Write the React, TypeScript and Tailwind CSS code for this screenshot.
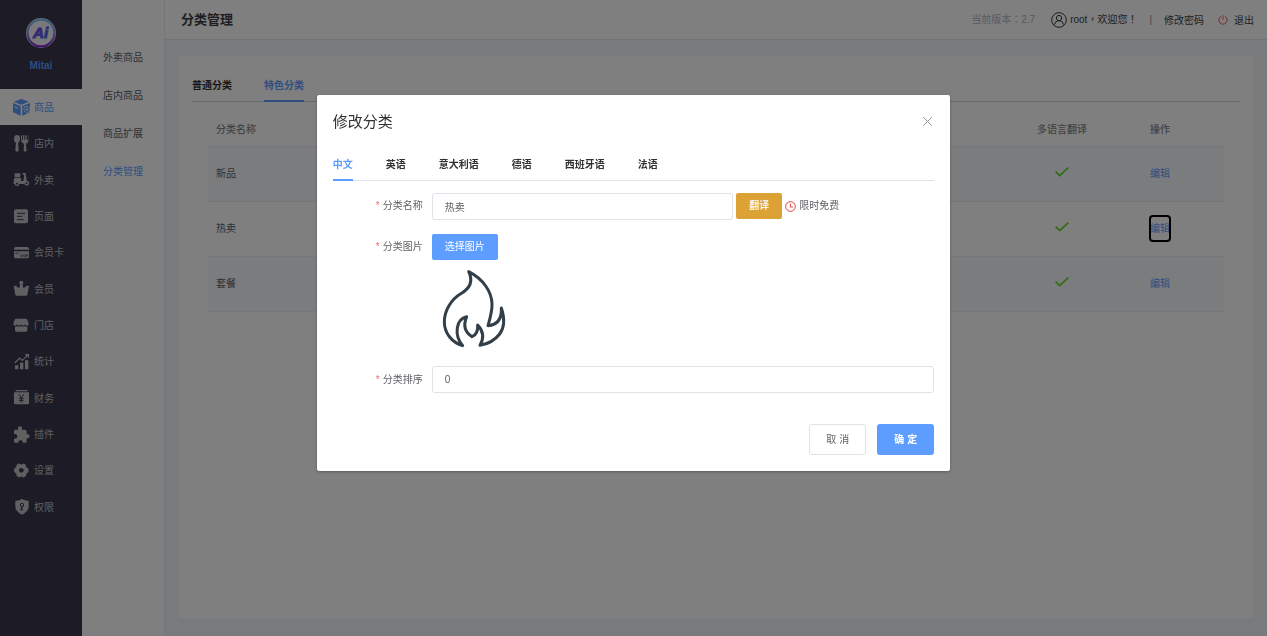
import { useState } from "react";
import type { ReactNode } from "react";

const Icon = ({ children }: { children: ReactNode }) => (
  <svg viewBox="0 0 51 51" className="size-[17px] shrink-0" fill="currentColor" aria-hidden="true">
    {children}
  </svg>
);

const dark = "#3a364b";

const navItems: { label: string; icon: ReactNode }[] = [
  {
    label: "商品",
    icon: (
      <>
        <path d="M25 0 48 8 25 17 2 8Z" />
        <path d="M0 12 23 21V50L0 40Z" />
        <path d="M28 21 51 12V40L28 50Z" />
        <path d="M5 24 15 28" stroke="#fff" strokeWidth="3" />
        <circle cx="42" cy="31" r="10" fill="#fff" />
        <circle cx="42" cy="31" r="8" />
        <circle cx="42" cy="31" r="3.5" fill="#fff" />
      </>
    ),
  },
  {
    label: "店内",
    icon: (
      <>
        <ellipse cx="12" cy="12" rx="9" ry="12" />
        <path d="M9 20h6l2 27q-5 5-10 0Z" />
        <path d="M23 1h4v13h3V1h4v13h3V1h4v13h4V1h1v17q0 6-7 8l2 21q-5 5-9 0l1-21q-8-2-8-8Z" />
      </>
    ),
  },
  {
    label: "外卖",
    icon: (
      <>
        <path d="M5 7h17v12H5Z" />
        <path d="M4 21h20v9h7L34 11h-5V6h9l3 23q8 2 8 10h-8q-3-6-9 0H20q-4-6-9 0H2V31q0-5 2-10Z" />
        <circle cx="12" cy="38" r="5" fill={dark} stroke="currentColor" strokeWidth="4" />
        <circle cx="41" cy="37" r="5" fill={dark} stroke="currentColor" strokeWidth="4" />
      </>
    ),
  },
  {
    label: "页面",
    icon: (
      <>
        <rect x="3" y="4" width="42" height="42" rx="6" />
        <path d="M12 16h25M12 25h16M12 35h20" stroke={dark} strokeWidth="3" />
      </>
    ),
  },
  {
    label: "会员卡",
    icon: (
      <>
        <path d="M3 14q0-5 5-5h35q5 0 5 5v3H3Z" />
        <path d="M3 22h45v17q0 4-5 4H8q-5 0-5-4Z" />
        <path d="M7 28h10M23 32l3 7 3-7M33 31v9M38 40v-8h6v4h-6" stroke={dark} strokeWidth="2" fill="none" />
      </>
    ),
  },
  {
    label: "会员",
    icon: (
      <>
        <circle cx="25" cy="8" r="6" />
        <path d="M22 11h6l3 12q5 2 9-6l8 1-5 26q-1 3-4 3H11q-3 0-4-3L2 18l8-1q4 8 9 6Z" />
      </>
    ),
  },
  {
    label: "门店",
    icon: (
      <>
        <path d="M9 5h30q3 0 4 3l4 12q0 6-5 6t-6-4q-2 4-6 4t-6-4q-2 4-6 4t-6-4q-2 4-6 4t-5-6L5 8q1-3 4-3Z" />
        <path d="M6 29q5 0 7-2 5 4 11 0 6 4 12 0 2 2 7 2v11q0 4-4 4H10q-4 0-4-4Z" />
      </>
    ),
  },
  {
    label: "统计",
    icon: (
      <>
        <path d="M6 37h10v12H6ZM21 29h10v20H21ZM36 22h10v27H36Z" />
        <path d="M5 30 20 15l8 7L43 7" fill="none" stroke="currentColor" strokeWidth="3.5" />
        <path d="M35 3h13v13Z" />
      </>
    ),
  },
  {
    label: "财务",
    icon: (
      <>
        <path d="M8 3h35v4H8Z" />
        <path d="M3 10h45v32q0 4-4 4H7q-4 0-4-4Z" />
        <path d="m18 16 7 10 7-10M25 26v15M18 28h14M18 34h14" stroke={dark} strokeWidth="3" fill="none" />
      </>
    ),
  },
  {
    label: "插件",
    icon: (
      <path d="M44 25h-3v-9q0-5-5-5h-9V7a6 6 0 0 0-12 0v4H7q-4 0-4 5v8h3a7 7 0 0 1 0 14H3v8q0 4 4 4h9v-3a7 7 0 0 1 13 0v3h8q4 0 4-4v-9h3a6 6 0 0 0 0-12Z" />
    ),
  },
  {
    label: "设置",
    icon: (
      <>
        <path
          d="m18 6 7 3 7-3 5 3 1 7 7 4v10l-6 4-1 7-6 4-7-3-7 3-6-4-1-7-6-4V20l6-4 1-7Z"
          stroke="currentColor"
          strokeWidth="3"
          strokeLinejoin="round"
        />
        <circle cx="25" cy="25" r="7" fill={dark} />
      </>
    ),
  },
  {
    label: "权限",
    icon: (
      <>
        <path d="M27 3q10 6 20 5v18q0 14-20 24Q7 40 7 26V8q10 1 20-5Z" />
        <circle cx="27" cy="21" r="5" fill="none" stroke={dark} strokeWidth="3" />
        <path d="M27 26v13M27 35h-5M27 30h-4" stroke={dark} strokeWidth="3" />
      </>
    ),
  },
];

const subItems = ["外卖商品", "店内商品", "商品扩展", "分类管理"];
const rows = ["新品", "热卖", "套餐"];
const languages = ["中文", "英语", "意大利语", "德语", "西班牙语", "法语"];

function Logo() {
  return (
    <svg viewBox="0 0 90 90" className="size-[30px]" aria-hidden="true">
      <defs>
        <linearGradient id="ring" x1="0" y1="0" x2="0" y2="1">
          <stop offset="0" stopColor="#78c4fa" />
          <stop offset="0.5" stopColor="#9a86e0" />
          <stop offset="1" stopColor="#7a1fd0" />
        </linearGradient>
        <linearGradient id="mark" x1="0" y1="0" x2="1" y2="1">
          <stop offset="0" stopColor="#8a35dc" />
          <stop offset="1" stopColor="#3a7df5" />
        </linearGradient>
      </defs>
      <circle cx="45" cy="45" r="45" fill="#d9d6ea" />
      <circle cx="45" cy="45" r="40" fill="#f4f4fa" stroke="url(#ring)" strokeWidth="6" />
      <text
        x="44"
        y="61"
        textAnchor="middle"
        fontSize="46"
        fontWeight="700"
        fontStyle="italic"
        fontFamily="Liberation Sans, sans-serif"
        fill="url(#mark)"
        stroke="url(#mark)"
        strokeWidth="3"
      >
        Ai
      </text>
    </svg>
  );
}

function Sidebar() {
  return (
    <aside className="w-[82px] shrink-0 bg-[#3a364b]">
      <div className="flex h-[89px] flex-col items-center pt-[18px]">
        <Logo />
        <span className="mt-2.5 text-[10px] leading-4 font-bold text-[#5c9dff]">Mitai</span>
      </div>
      <nav className="grid h-[436px] auto-rows-fr">
        {navItems.map((item, i) => (
          <a
            key={item.label}
            href="#"
            className={`flex items-center gap-1 pl-[13px] ${i === 0 ? "bg-white text-[#5c9dff]" : "text-[#c0c0c4]"}`}
          >
            <Icon>{item.icon}</Icon>
            <span className="pt-0.5">{item.label}</span>
          </a>
        ))}
      </nav>
    </aside>
  );
}

function Header() {
  return (
    <header className="flex h-10 items-center justify-between border-b border-[#e4e6ea] bg-white pr-[13px] pl-4 text-[#3c3e46]">
      <h1 className="text-[13px] font-bold">分类管理</h1>
      <div className="flex items-center font-['Liberation_Sans','Noto_Sans_CJK_TC',sans-serif]">
        <span className="text-[#b4b4b8]">当前版本：2.7</span>
        <svg viewBox="0 0 48 48" className="ml-4 size-4" fill="none" stroke="currentColor" strokeWidth="3" aria-hidden="true">
          <circle cx="24" cy="24" r="22" />
          <circle cx="24" cy="18" r="8" />
          <path d="M10 38q2-12 14-12t14 12" />
        </svg>
        <span className="ml-[3px]">root，欢迎您！</span>
        <span className="mx-3 text-[#8a8a90]">|</span>
        <a href="#" className="font-['Noto_Sans_CJK_SC',sans-serif]">
          修改密码
        </a>
        <svg viewBox="0 0 30 30" className="mr-1.5 ml-[14px] size-2.5" fill="none" stroke="#f25555" strokeWidth="3" aria-hidden="true">
          <path d="M15 1v13M9 4a12.5 12.5 0 1 0 12 0" />
        </svg>
        <a href="#" className="font-['Noto_Sans_CJK_SC',sans-serif]">
          退出
        </a>
      </div>
    </header>
  );
}

function CategoryTable() {
  return (
    <table className="w-full table-fixed border-collapse text-left text-[#606266]">
      <colgroup>
        <col />
        <col className="w-40" />
        <col className="w-[82px]" />
      </colgroup>
      <thead>
        <tr className="h-[33px] border-b border-[#ebeef5] text-[#85878c]">
          <th className="px-2 pt-0.5 font-medium">分类名称</th>
          <th className="px-2 pt-0.5 text-center font-medium">多语言翻译</th>
          <th className="px-2 pt-0.5 font-medium">操作</th>
        </tr>
      </thead>
      <tbody>
        {rows.map((name, i) => (
          <tr key={name} className="h-[55px] border-b border-[#ebeef5] odd:bg-[#f5f8fc]">
            <td className="px-2">{name}</td>
            <td className="px-2 pb-[3px]">
              <svg viewBox="0 0 42 30" className="mx-auto h-2.5 w-3.5" fill="none" stroke="#67d52a" strokeWidth="5" aria-label="已翻译">
                <path d="m2 14 12 12L40 2" />
              </svg>
            </td>
            <td className="px-2">
              <button
                type="button"
                className={`h-[25px] rounded-[3px] text-[#5c9dff] ${i === 1 ? "outline-2 -outline-offset-1 outline-black" : ""}`}
              >
                编辑
              </button>
            </td>
          </tr>
        ))}
      </tbody>
    </table>
  );
}

const tabClass = "relative h-full font-bold";
const activeTab = "text-[#5c9dff] after:absolute after:inset-x-0 after:-bottom-px after:h-0.5 after:bg-[#5c9dff]";

function Label({ htmlFor, children }: { htmlFor: string; children: ReactNode }) {
  return (
    <label htmlFor={htmlFor} className="flex h-[26px] w-[99px] shrink-0 items-center justify-end gap-[3px] pr-[9px] text-[#606266]">
      <span className="text-[#f56c6c]">*</span>
      {children}
    </label>
  );
}

const inputClass = "h-[27px] min-w-0 flex-1 rounded-[3px] border border-[#dfe2e8] px-3 pb-px text-[#606266] outline-none";

function EditDialog() {
  const [lang, setLang] = useState("中文");
  return (
    <div className="fixed inset-0 bg-black/50">
      <section
        role="dialog"
        aria-modal="true"
        aria-label="修改分类"
        className="mx-auto mt-[15vh] w-1/2 rounded-xs bg-white px-4 pb-4 shadow-[0_1px_3px_rgba(0,0,0,0.3)]"
      >
        <div className="flex h-[53px] items-center justify-between">
          <h2 className="text-[15px] text-[#303133]">修改分类</h2>
          <button type="button" aria-label="关闭" className="px-0.5">
            <svg viewBox="0 0 27 27" className="size-[9px]" fill="none" stroke="#909399" strokeWidth="3" aria-hidden="true">
              <path d="m1 1 25 25M26 1 1 26" />
            </svg>
          </button>
        </div>
        <div role="tablist" className="flex h-[33px] gap-[33px] border-b border-[#dfe2e8]">
          {languages.map((l) => (
            <button
              key={l}
              type="button"
              role="tab"
              aria-selected={l === lang}
              onClick={() => setLang(l)}
              className={`${tabClass} pt-0.5 ${l === lang ? activeTab : "text-[#303133]"}`}
            >
              {l}
            </button>
          ))}
        </div>
        <form onSubmit={(e) => e.preventDefault()}>
          <div className="mt-3 flex items-start">
            <Label htmlFor="name">分类名称</Label>
            <input id="name" defaultValue="热卖" className={inputClass} />
            <button type="button" className="ml-[3px] h-[26px] w-[46px] rounded-xs bg-[#dca235] font-medium text-white">
              翻译
            </button>
            <div className="flex h-[26px] w-[152px] items-center gap-[3px] pl-[3px] text-[#606266]">
              <svg viewBox="0 0 33 33" className="size-[11px]" fill="none" stroke="#e23c39" strokeWidth="3" aria-hidden="true">
                <circle cx="16.5" cy="16.5" r="14.5" />
                <path d="M16 8v10h8" />
              </svg>
              限时免费
            </div>
          </div>
          <div className="mt-3.5 flex items-start">
            <Label htmlFor="picture">分类图片</Label>
            <div>
              <button id="picture" type="button" className="block h-[26px] w-[66px] rounded-xs bg-[#5c9dff] text-white">
                选择图片
              </button>
              <svg
                viewBox="36 126 246 246"
                className="mt-[7px] size-[82px]"
                fill="none"
                stroke="#333f48"
                strokeWidth="9"
                strokeLinecap="round"
                strokeLinejoin="round"
                role="img"
                aria-label="火焰"
              >
                <path d="M128 362C97 353 73 326 73 290C73 257 94 223 121 207C146 193 162 172 146 140C191 163 214 200 216 235C217 258 211 278 204 302C227 300 246 286 244 249C254 279 254 307 239 327C225 345 205 357 180 361C192 340 191 319 173 300C174 317 169 330 156 335C140 325 127 306 140 275C108 282 101 329 128 362Z" />
              </svg>
            </div>
          </div>
          <div className="mt-[17px] flex items-center">
            <Label htmlFor="order">分类排序</Label>
            <input id="order" defaultValue="0" className={inputClass} />
          </div>
          <div className="mt-[31px] flex justify-end gap-[11px]">
            <button type="button" className="h-[31px] w-[57px] rounded-[3px] border border-[#dfe2e8] text-[#606266]">
              取 消
            </button>
            <button type="submit" className="h-[31px] w-[57px] rounded-[3px] bg-[#5c9dff] font-bold text-white">
              确 定
            </button>
          </div>
        </form>
      </section>
    </div>
  );
}

export default function App() {
  return (
    <div className="flex min-h-screen bg-[#f3f5f9] font-['Liberation_Sans','Noto_Sans_CJK_SC',sans-serif] text-[10px] leading-4">
      <Sidebar />
      <nav className="flex w-[83px] shrink-0 flex-col items-center border-r border-[#eceef2] bg-white pt-[39px] text-[#606266]">
        {subItems.map((label, i) => (
          <a key={label} href="#" className={`flex h-[38px] items-center ${i === 3 ? "text-[#5c9dff]" : ""}`}>
            {label}
          </a>
        ))}
      </nav>
      <div className="flex min-w-0 flex-1 flex-col">
        <Header />
        <main className="flex flex-1 flex-col px-[13px] pt-4 pb-[18px]">
          <div className="flex-1 bg-white px-[14px] pt-3.5">
            <div role="tablist" className="flex h-8 gap-8 border-b border-[#d4d7de]">
              <button type="button" role="tab" aria-selected="false" className={`${tabClass} text-[#303133]`}>
                普通分类
              </button>
              <button type="button" role="tab" aria-selected="true" className={`${tabClass} ${activeTab}`}>
                特色分类
              </button>
            </div>
            <div className="px-4 pt-[11px]">
              <CategoryTable />
            </div>
          </div>
        </main>
      </div>
      <EditDialog />
    </div>
  );
}
